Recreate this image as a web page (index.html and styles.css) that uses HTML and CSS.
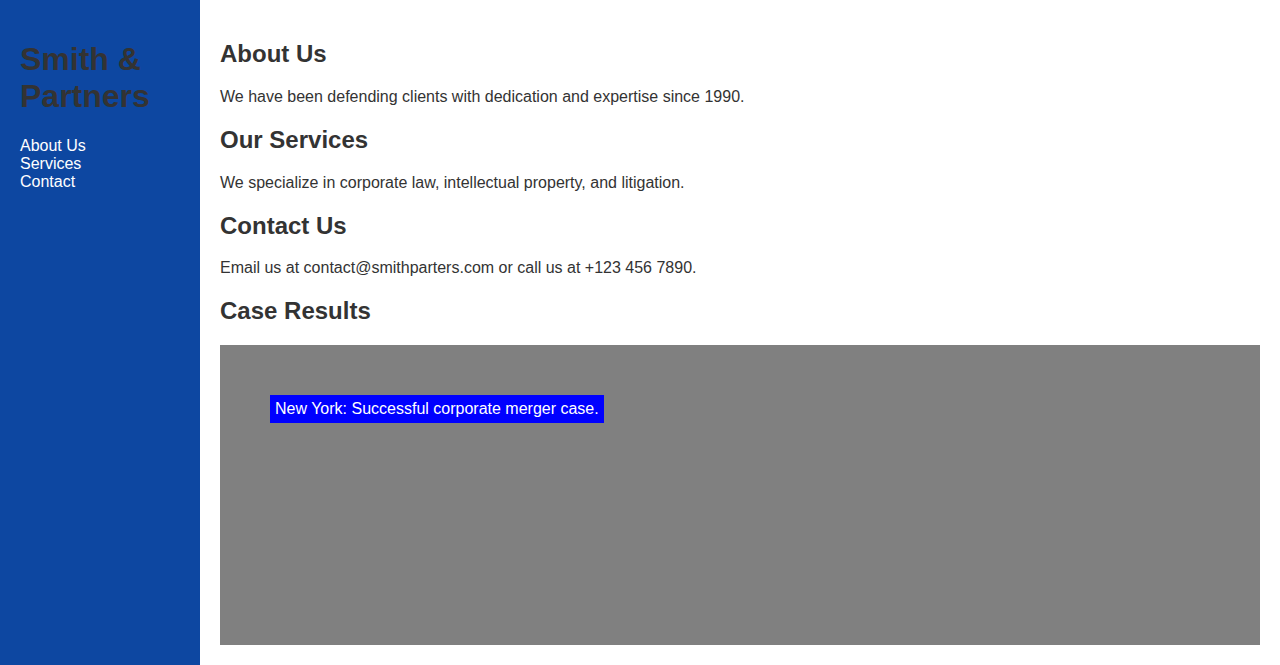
FILE: index.html
```html
<!DOCTYPE html>
<html lang="en">
<head>
<meta charset="utf-8">
<title>Smith &amp; Partners</title>
<link rel="stylesheet" href="styles.css">
</head>
<body>
<div class="layout">
  <aside class="sidebar">
    <h1 class="brand">Smith &amp; Partners</h1>
    <ul class="nav">
      <li><a href="#about">About Us</a></li>
      <li><a href="#services">Services</a></li>
      <li><a href="#contact">Contact</a></li>
    </ul>
  </aside>
  <main class="main">
    <h2 id="about">About Us</h2>
    <p>We have been defending clients with dedication and expertise since 1990.</p>
    <h2 id="services">Our Services</h2>
    <p>We specialize in corporate law, intellectual property, and litigation.</p>
    <h2 id="contact">Contact Us</h2>
    <p>Email us at contact@smithparters.com or call us at +123 456 7890.</p>
    <h2>Case Results</h2>
    <div class="map">
      <div class="pin">New York: Successful corporate merger case.</div>
    </div>
  </main>
</div>
</body>
</html>
```

FILE: styles.css
```css
html, body {
  margin: 0;
  padding: 0;
}
body {
  font-family: "Liberation Sans", Arial, sans-serif;
  font-size: 16px;
  color: #333;
  background: #fff;
}
.layout {
  display: flex;
  min-height: 100vh;
}
.sidebar {
  width: 200px;
  flex: 0 0 200px;
  box-sizing: border-box;
  padding: 20px;
  background: #0d47a1;
}
.brand {
  font-size: 32px;
  margin: 21.44px 0;
  color: #333;
}
.nav {
  list-style: none;
  margin: 0;
  padding: 0;
}
.nav a {
  color: #fff;
  text-decoration: none;
}
.main {
  flex: 1;
  padding: 20px;
  min-width: 0;
}
.main h2 {
  font-size: 24px;
  margin: 19.92px 0;
}
.main p {
  margin: 16px 0;
}
.map {
  position: relative;
  height: 300px;
  background: #808080;
}
.pin {
  position: absolute;
  left: 50px;
  top: 50px;
  padding: 5px;
  background: #0000ff;
  color: #fff;
}
```
